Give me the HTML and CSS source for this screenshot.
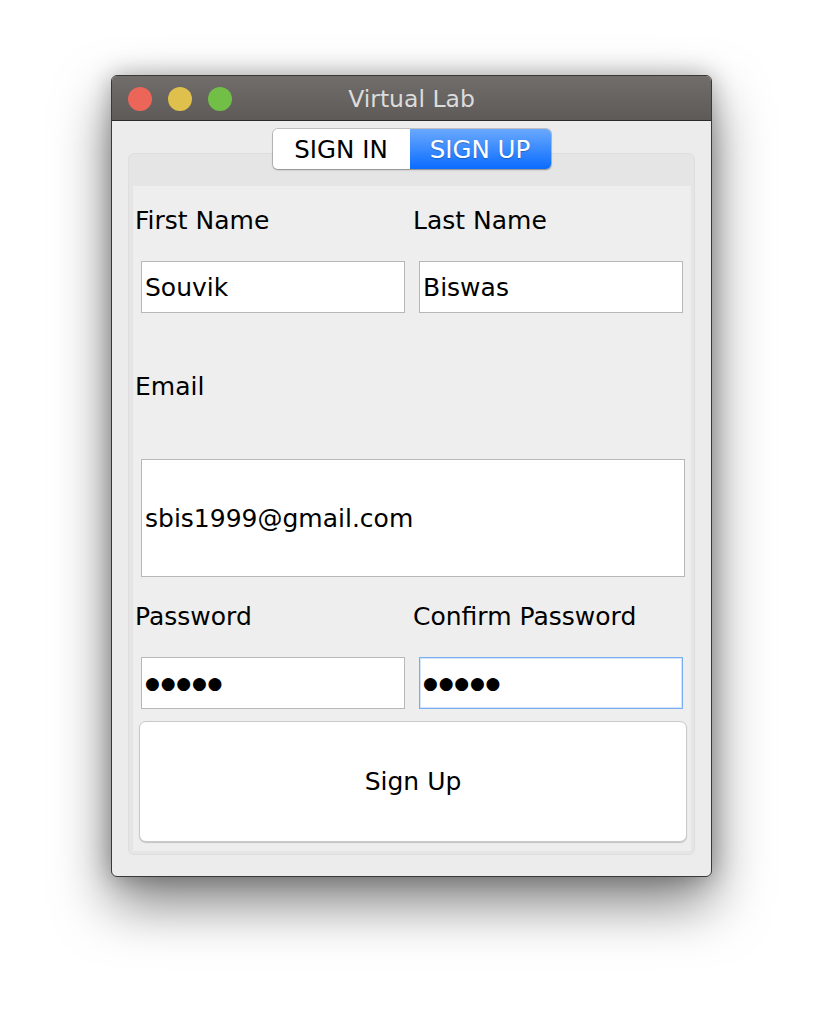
FILE: index.html
```html
<!DOCTYPE html>
<html>
<head>
<meta charset="utf-8">
<title>Virtual Lab</title>
<link rel="stylesheet" href="styles.css">
</head>
<body>
<div class="window">
  <div class="titlebar">
    <div class="lights">
      <span class="light red"></span>
      <span class="light yellow"></span>
      <span class="light green"></span>
    </div>
    <div class="title">Virtual Lab</div>
    <div></div>
  </div>
  <div class="body">
    <div class="tabs">
      <div class="tab">SIGN IN</div>
      <div class="tab active">SIGN UP</div>
    </div>
    <div class="pane">
      <div class="panel">
        <div class="row labels">
          <div class="label">First Name</div>
          <div class="label">Last Name</div>
        </div>
        <div class="row fields">
          <div class="cell"><div class="field">Souvik</div></div>
          <div class="cell"><div class="field">Biswas</div></div>
        </div>
        <div class="label email-label">Email</div>
        <div class="field email">sbis1999@gmail.com</div>
        <div class="row labels pw-labels">
          <div class="label">Password</div>
          <div class="label">Confirm Password</div>
        </div>
        <div class="row fields pw-fields">
          <div class="cell"><div class="field dots">●●●●●</div></div>
          <div class="cell"><div class="field dots focus">●●●●●</div></div>
        </div>
        <div class="button">Sign Up</div>
      </div>
    </div>
  </div>
</div>
</body>
</html>
```

FILE: styles.css
```css
* { box-sizing: border-box; }
html, body { margin: 0; padding: 0; background: #ffffff; }
body {
  font-family: "DejaVu Sans", "Liberation Sans", sans-serif;
  color: #000;
  min-height: 1024px;
  padding-top: 75px;
}

.window {
  margin: 0 0 0 111px;
  width: 601px;
  height: 802px;
  border: 1px solid #3b3938;
  border-radius: 6px;
  overflow: hidden;
  background: #ececec;
  display: flex;
  flex-direction: column;
  box-shadow: 0 26px 55px rgba(0,0,0,0.5), 0 0 24px rgba(0,0,0,0.28);
}

.titlebar {
  height: 45px;
  flex: none;
  display: grid;
  grid-template-columns: 1fr auto 1fr;
  align-items: center;
  background: linear-gradient(#716d6b, #5d5a58);
  border-bottom: 1px solid #2c2a29;
}
.lights { display: flex; gap: 16px; padding-left: 16px; padding-top: 1px; }
.light { width: 24px; height: 24px; border-radius: 50%; display: block; }
.red { background: #ec6559; }
.yellow { background: #e0c04c; }
.green { background: #72bf47; }
.title { color: #dcdcdc; font-size: 23.5px; padding-top: 1px; }

.body { flex: 1; display: flex; flex-direction: column; padding: 0 16px; }

.tabs {
  position: relative;
  z-index: 1;
  align-self: center;
  margin-top: 8px;
  height: 40px;
  display: flex;
  border-radius: 5px;
  box-shadow: 0 0 0 1px rgba(0,0,0,0.18), 0 1px 2px rgba(0,0,0,0.25);
  overflow: hidden;
}
.tab {
  width: 137px;
  display: flex;
  align-items: center;
  justify-content: center;
  font-size: 24.5px;
  background: #ffffff;
  color: #000;
}
.tab.active {
  width: 141px;
  color: #ffffff;
  background: linear-gradient(#6aa9fe, #0a6cfe);
  text-shadow: 0 1px 1px rgba(0,0,0,0.25);
}

.pane {
  margin-top: -16px;
  height: 702px;
  border: 1px solid #dedede;
  border-radius: 6px;
  background: #e5e5e5;
  padding: 32px 4px 3px 4px;
  display: flex;
}
.panel {
  flex: 1;
  background: #eeeeee;
  padding: 15px 0 0 2px;
  display: flex;
  flex-direction: column;
}

.row { display: grid; grid-template-columns: 278px 278px; }
.label { height: 40px; line-height: 40px; font-size: 25px; white-space: nowrap; }
.fields { margin-top: 20px; }
.cell { padding: 0 8px 0 6px; }
.field {
  height: 52px;
  background: #ffffff;
  border: 1px solid #b8b8b8;
  font-size: 25px;
  display: flex;
  align-items: center;
  padding-left: 3px;
  white-space: nowrap;
}
.email-label { margin-top: 54px; }
.field.email { margin: 52px 0 0 6px; width: 544px; height: 118px; }
.pw-labels { margin-top: 20px; }
.pw-fields { margin-top: 20px; }
.dots { font-size: 17px; letter-spacing: 0.8px; padding-left: 3px; }
.field.focus { border-color: #78adf0; box-shadow: inset 0 0 0 1px #d2e4fa; }

.button {
  margin: 12px 0 0 4px;
  width: 548px;
  height: 121px;
  background: #ffffff;
  border: 1px solid #c9c9c9;
  border-radius: 7px;
  box-shadow: 0 1px 1px rgba(0,0,0,0.18);
  display: flex;
  align-items: center;
  justify-content: center;
  font-size: 25px;
}
```
